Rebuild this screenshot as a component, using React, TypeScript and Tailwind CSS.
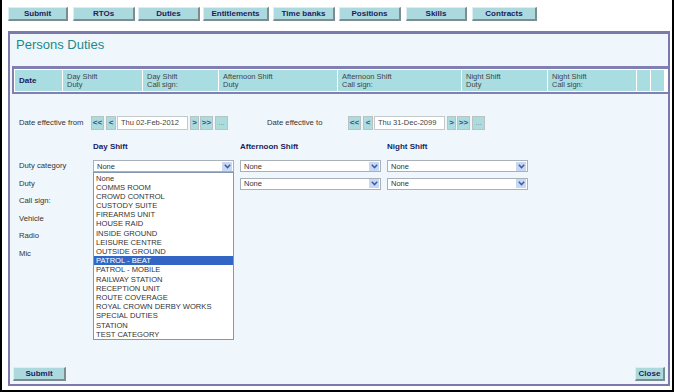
import React from "react";

const F = "font-['Liberation_Sans',Arial,sans-serif]";

function TopBtn({ label, w }: { label: string; w: string }) {
  return (
    <div
      className={`${w} h-[14px] flex items-center justify-center bg-[#acd9dd] border-t border-l border-t-[#d9eff1] border-l-[#d9eff1] border-r-2 border-b-2 border-r-[#7d8c8e] border-b-[#7d8c8e] text-[8px] font-bold text-[#1c1c5c] leading-none`}
    >
      {label}
    </div>
  );
}

function Chevron() {
  return (
    <svg width="7" height="5" viewBox="0 0 7 5">
      <path d="M0.8 0.8 L3.5 3.6 L6.2 0.8" fill="none" stroke="#3a5ea8" strokeWidth="1.5" />
    </svg>
  );
}

function Select({ w = "w-[141px]" }: { w?: string }) {
  return (
    <div className={`${w} h-[12px] bg-white border border-[#a9b0b8] flex items-center justify-between pl-[3px] pr-[1px]`}>
      <span className="text-[7.5px] text-[#333] leading-none">None</span>
      <div className="w-[10px] h-[9px] bg-[#c9d8f2] flex items-center justify-center">
        <Chevron />
      </div>
    </div>
  );
}

function PBtn({ label, w }: { label: string; w: string }) {
  return (
    <div className={`${w} h-[14px] flex items-center justify-center bg-[#acdcdc] border border-[#b9c3c3] text-[8px] font-bold text-[#2a50a8] leading-none`}>
      {label}
    </div>
  );
}

function DatePicker({ value }: { value: string }) {
  return (
    <div className="flex items-center h-[14px]">
      <PBtn label="<<" w="w-[13px]" />
      <div className="w-[2px]" />
      <PBtn label="<" w="w-[10px]" />
      <div className="w-[1px]" />
      <div className="w-[71px] h-[14px] bg-white border border-[#c4c9cc] flex items-center pl-[3px] text-[7.5px] text-[#444] leading-none">
        {value}
      </div>
      <div className="w-[2px]" />
      <PBtn label=">" w="w-[9px]" />
      <div className="w-[1px]" />
      <PBtn label=">>" w="w-[13px]" />
      <div className="w-[2px]" />
      <div className="w-[13px] h-[14px] flex items-center justify-center bg-[#acdcdc] border border-[#b9c3c3] text-[8px] text-[#7a8a9a] leading-none">
        ...
      </div>
    </div>
  );
}

function HCell({ w, a, b, bold }: { w: string; a?: string; b?: string; bold?: boolean }) {
  return (
    <div className={`${w} h-full bg-[#a9dde1] flex flex-col justify-center pl-[4px]`}>
      {bold ? (
        <span className="text-[8px] font-bold text-[#1c1c5c] leading-none">{a}</span>
      ) : (
        <>
          <span className="text-[7.5px] text-[#444] leading-[8px]">{a}</span>
          <span className="text-[7.5px] text-[#444] leading-[8px]">{b}</span>
        </>
      )}
    </div>
  );
}

const ITEMS = [
  "None",
  "COMMS ROOM",
  "CROWD CONTROL",
  "CUSTODY SUITE",
  "FIREARMS UNIT",
  "HOUSE RAID",
  "INSIDE GROUND",
  "LEISURE CENTRE",
  "OUTSIDE GROUND",
  "PATROL - BEAT",
  "PATROL - MOBILE",
  "RAILWAY STATION",
  "RECEPTION UNIT",
  "ROUTE COVERAGE",
  "ROYAL CROWN DERBY WORKS",
  "SPECIAL DUTIES",
  "STATION",
  "TEST CATEGORY",
];

export default function App() {
  const labels = ["Duty category", "Duty", "Call sign:", "Vehicle", "Radio", "Mic"];
  return (
    <div className={`${F} w-[674px] h-[392px] bg-white border-l-2 border-r-2 border-b-2 border-black flex flex-col overflow-hidden`}>
      {/* top nav */}
      <div className="flex pt-[7px] pl-[6px] h-[31px]">
        <TopBtn label="Submit" w="w-[60px]" />
        <div className="w-[5px]" />
        <TopBtn label="RTOs" w="w-[62px]" />
        <div className="w-[3px]" />
        <TopBtn label="Duties" w="w-[62px]" />
        <div className="w-[3px]" />
        <TopBtn label="Entitlements" w="w-[66px]" />
        <div className="w-[4px]" />
        <TopBtn label="Time banks" w="w-[62px]" />
        <div className="w-[4px]" />
        <TopBtn label="Positions" w="w-[62px]" />
        <div className="w-[5px]" />
        <TopBtn label="Skills" w="w-[61px]" />
        <div className="w-[5px]" />
        <TopBtn label="Contracts" w="w-[65px]" />
      </div>

      {/* panel */}
      <div className="ml-[6px] w-[662px] h-[355px] border-2 border-t-[3px] border-[#7c7aaa] bg-[#eff7fc] flex flex-col relative">
        <div className="pl-[6px] pt-[3px] h-[32px] text-[13px] text-[#1a8a8c] leading-[15px]">Persons Duties</div>

        {/* header table */}
        <div className="ml-[2px] h-[28px] border-t-[3px] border-b-[2px] border-l-[2px] border-[#8280b2] bg-white p-[1px] flex gap-[1px]">
          <HCell w="w-[47px]" a="Date" bold />
          <HCell w="w-[79px]" a="Day Shift" b="Duty" />
          <HCell w="w-[75px]" a="Day Shift" b="Call sign:" />
          <HCell w="w-[118px]" a="Afternoon Shift" b="Duty" />
          <HCell w="w-[123px]" a="Afternoon Shift" b="Call sign:" />
          <HCell w="w-[85px]" a="Night Shift" b="Duty" />
          <HCell w="w-[88px]" a="Night Shift" b="Call sign:" />
          <HCell w="w-[13px]" />
          <HCell w="w-[13px]" />
        </div>

        {/* date row */}
        <div className="flex items-center h-[14px] mt-[22px]">
          <div className="w-[81px] pl-[9px] text-[7.7px] text-[#333] leading-none">Date effective from</div>
          <DatePicker value="Thu 02-Feb-2012" />
          <div className="w-[39px]" />
          <div className="w-[81px] text-[7.7px] text-[#333] leading-none">Date effective to</div>
          <DatePicker value="Thu 31-Dec-2099" />
        </div>

        {/* form */}
        <div className="flex mt-[9px] relative">
          <div className="w-[83px] flex flex-col">
            <div className="h-[18.5px]" />
            {labels.map((l) => (
              <div key={l} className="h-[17.5px] flex items-center pl-[9px] text-[7.7px] text-[#333] leading-none">
                {l}
              </div>
            ))}
          </div>
          {[
            { h: "Day Shift", rows: 1 },
            { h: "Afternoon Shift", rows: 2 },
            { h: "Night Shift", rows: 2 },
          ].map((c, i) => (
            <div key={c.h} className={`w-[141px] flex flex-col ${i > 0 ? "ml-[6px]" : ""} relative`}>
              <div className="h-[16.5px] mb-[2px] flex items-center text-[8px] font-bold text-[#1c1c5c] leading-none">{c.h}</div>
              <div className="h-[17.5px] flex items-center">
                <Select />
              </div>
              {c.rows > 1 && (
                <div className="h-[17.5px] flex items-center">
                  <Select />
                </div>
              )}
              {i === 0 && (
                <div className="absolute left-0 top-[33px] w-[141px] bg-white border border-[#8397b3] flex flex-col py-[0.5px]">
                  {ITEMS.map((it) => (
                    <div
                      key={it}
                      className={`h-[9.2px] pl-[2px] text-[7.6px] leading-[9.2px] whitespace-nowrap ${
                        it === "PATROL - BEAT" ? "bg-[#3366c4] text-white" : "text-[#333]"
                      }`}
                    >
                      {it}
                    </div>
                  ))}
                </div>
              )}
            </div>
          ))}
        </div>

        {/* bottom buttons */}
        <div className="mt-auto mb-[3px] flex justify-between px-[3px]">
          <TopBtn label="Submit" w="w-[53px]" />
          <TopBtn label="Close" w="w-[30px]" />
        </div>
      </div>
    </div>
  );
}
